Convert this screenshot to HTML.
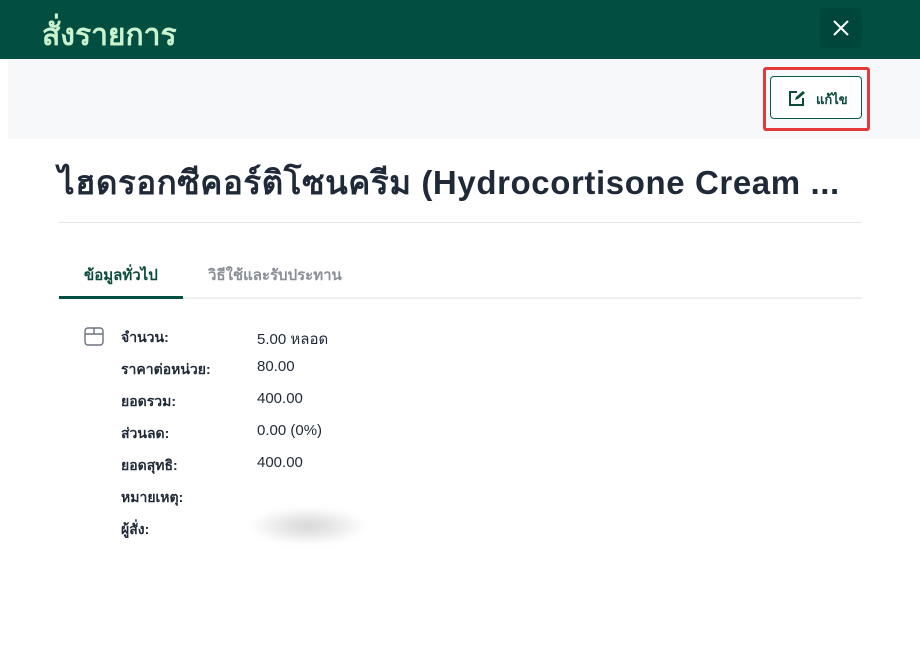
<!DOCTYPE html>
<html><head><meta charset="utf-8"><style>
body{margin:0;width:920px;height:664px;background:#fff;font-family:"Liberation Sans","Noto Sans CJK SC",sans-serif;position:relative;overflow:hidden}
.hdr{position:absolute;left:0;top:0;width:920px;height:59px;background:#024e40}
.ttl{position:absolute;left:42px;top:12px;font-size:30px;color:#c9f2cf;font-weight:bold}
.close{position:absolute;left:820px;top:8px;width:42px;height:40px;background:#01463a;border-radius:4px}
.band{position:absolute;left:8px;top:59px;width:912px;height:80px;background:#f7f8fa}
.red{position:absolute;left:763px;top:67px;width:101px;height:58px;border:3px solid #e5383b;border-radius:3px;box-sizing:content-box}
.btn{position:absolute;left:770px;top:76px;width:90px;height:41px;border:1px solid #0b5a48;border-radius:4px;background:#fff}
.btn span{position:absolute;left:45px;top:12px;font-size:13px;font-weight:bold;color:#0b4a3c}
h1{position:absolute;left:58px;top:156px;margin:0;font-size:33px;letter-spacing:0.6px;font-weight:bold;color:#1f2937;white-space:nowrap}
.div{position:absolute;left:59px;top:222px;width:803px;height:1px;background:#e5e7eb}
.tabline{position:absolute;left:59px;top:297px;width:803px;height:2px;background:#eef0f3}
.tabact{position:absolute;left:59px;top:296px;width:124px;height:3px;background:#024e40}
.tab{position:absolute;top:263px;font-size:15px;font-weight:bold}
.lbl{position:absolute;left:121px;font-size:14px;font-weight:bold;color:#1f2937}
.val{position:absolute;left:257px;font-size:15px;color:#1f2937}
.blur{position:absolute;left:252px;top:508px;width:112px;height:36px;background:radial-gradient(ellipse at center,#d6d6d6 0%,#eee 45%,#fff 75%);filter:blur(3px)}
</style></head><body>
<div class="hdr"><div class="ttl">สั่งรายการ</div>
<div class="close"><svg width="42" height="40" viewBox="0 0 42 40"><path d="M14 13L28 27M28 13L14 27" stroke="#fff" stroke-width="2"/></svg></div></div>
<div class="band"></div>
<div class="red"></div>
<div class="btn"><svg style="position:absolute;left:17px;top:13px" width="18" height="16" viewBox="0 0 18 16"><path d="M9 2H2v13h13V8" fill="none" stroke="#0b4a3c" stroke-width="2"/><path d="M7 10l1-3 7-6 2 2-7 6z" fill="#0b4a3c"/></svg><span>แก้ไข</span></div>
<h1>ไฮดรอกซีคอร์ติโซนครีม (Hydrocortisone Cream ...</h1>
<div class="div"></div>
<div class="tab" style="left:84px;color:#0b4a3c">ข้อมูลทั่วไป</div>
<div class="tab" style="left:208px;color:#8a8f98">วิธีใช้และรับประทาน</div>
<div class="tabline"></div><div class="tabact"></div>
<svg style="position:absolute;left:84px;top:327px" width="20" height="19" viewBox="0 0 20 19"><rect x="1" y="1" width="18" height="17" rx="3" fill="none" stroke="#6b7280" stroke-width="1.4"/><path d="M1 7h18M10 1v6" stroke="#6b7280" stroke-width="1.4"/></svg>
<div class="lbl" style="top:327px">จำนวน:</div><div class="val" style="top:327px">5.00 หลอด</div>
<div class="lbl" style="top:359px">ราคาต่อหน่วย:</div><div class="val" style="top:358px">80.00</div>
<div class="lbl" style="top:391px">ยอดรวม:</div><div class="val" style="top:390px">400.00</div>
<div class="lbl" style="top:423px">ส่วนลด:</div><div class="val" style="top:422px">0.00 (0%)</div>
<div class="lbl" style="top:455px">ยอดสุทธิ:</div><div class="val" style="top:454px">400.00</div>
<div class="lbl" style="top:487px">หมายเหตุ:</div>
<div class="lbl" style="top:519px">ผู้สั่ง:</div>
<div class="blur"></div>
</body></html>
